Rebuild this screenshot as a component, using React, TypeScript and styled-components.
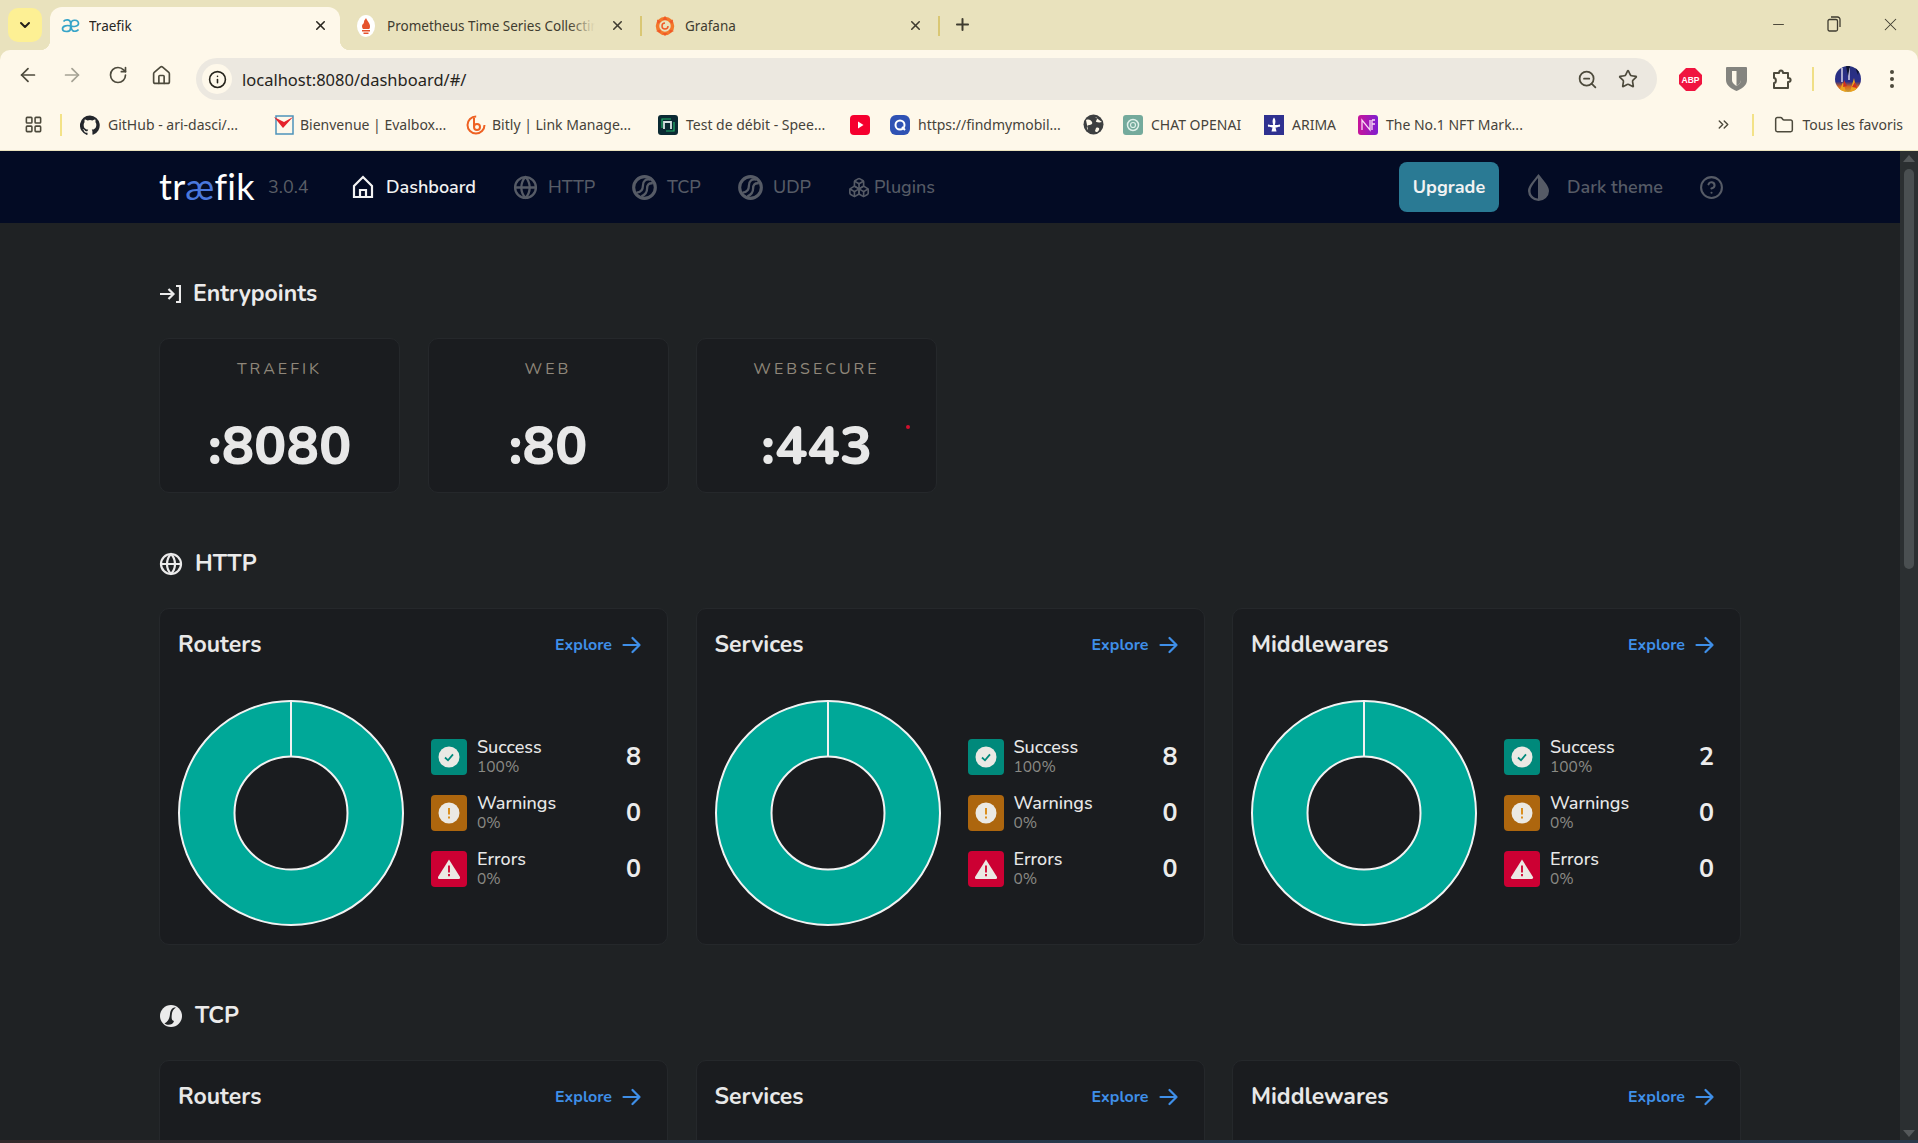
import React from "react";
import styled, { createGlobalStyle } from "styled-components";
import { ArrowLeft, ArrowRight, RotateCw, Home, Info, ZoomOut, Star, ChevronDown, X, Plus, Minus, Folder, ChevronsRight, LayoutGrid, Globe, Boxes, HelpCircle } from "lucide-react";

const Global = createGlobalStyle`
  html, body { margin: 0; padding: 0; background: #1f2224; overflow: hidden; }
  * { box-sizing: border-box; }
`;
const UI = `"Noto Sans", "Open Sans", sans-serif`;
const NU = `"Nunito", "Lato", "Noto Sans", sans-serif`;

const Page = styled.div`width: 1918px; height: 1143px; display: flex; flex-direction: column; overflow: hidden; background: #e9e2bd; position: relative;`;
const TabStrip = styled.div`height: 50px; display: flex; align-items: flex-end; padding-left: 8px; flex: none; font-family: ${UI}; color: #3f3c30;`;
const TabMenu = styled.div`width: 34px; height: 34px; margin-bottom: 8px; border-radius: 10px; background: #fdf094; display: flex; align-items: center; justify-content: center; color: #23201a; margin-right: 8px;`;
const ActiveTab = styled.div`
  width: 290px; height: 43px; background: #fef8ea; border-radius: 12px 12px 0 0; display: flex; align-items: center; padding: 0 12px 6px 11px; font-size: 13.5px; position: relative; color: #28261f; z-index: 1;
  &::before, &::after { content: ""; position: absolute; bottom: 0; width: 10px; height: 10px; background: radial-gradient(circle at 0 0, transparent 10px, #fef8ea 10.5px); }
  &::before { left: -10px; }
  &::after { right: -10px; background: radial-gradient(circle at 100% 0, transparent 10px, #fef8ea 10.5px); }
`;
const Tab = styled.div<{ $w: number; $pl: number }>`width: ${(p) => p.$w}px; height: 43px; display: flex; align-items: center; padding: 0 17px 6px ${(p) => p.$pl}px; font-size: 13.5px; position: relative; flex: none;
  &::after { content: ""; position: absolute; right: 0; top: 9px; height: 20px; width: 2px; background: #d9c774; }
`;
const TabTitle = styled.span<{ $ml: number; $mr?: number }>`flex: 1; margin-left: ${(p) => p.$ml}px; margin-right: ${(p) => p.$mr ?? 0}px; white-space: nowrap; overflow: hidden; position: relative;`;
const TabFade = styled.span`position: absolute; right: 0; top: 0; bottom: 0; width: 26px; background: linear-gradient(90deg, rgba(233,226,189,0), #e9e2bd);`;
const NewTab = styled.div`margin: 0 0 16px 13px; display: flex; color: #3f3c30;`;
const WinButtons = styled.div`margin-left: auto; display: flex; align-items: center; height: 50px; padding-bottom: 2px; color: #3f3c30;`;
const WinBtn = styled.div`width: 56px; display: flex; justify-content: center;`;

const Toolbar = styled.div`height: 50px; flex: none; background: #fef8ea; border-radius: 10px 10px 0 0; display: flex; align-items: center; padding-left: 17px; color: #4d4a3c; font-family: ${UI};`;
const NavBtn = styled.div<{ $w?: number; $dim?: boolean }>`width: ${(p) => p.$w ?? 45}px; display: flex; color: ${(p) => (p.$dim ? "#a5a294" : "#4d4a3c")}; flex: none;`;
const Omni = styled.div`width: 1461px; height: 42px; margin-top: 8px; border-radius: 21px; background: #ece8e0; display: flex; align-items: center; padding: 0 19px 0 6px; flex: none;`;
const InfoWrap = styled.div`width: 30px; height: 30px; border-radius: 50%; background: #fef8ea; display: flex; align-items: center; justify-content: center; color: #26241c;`;
const Url = styled.div`margin-left: 10px; font-size: 16.5px; color: #26241c; flex: 1;`;
const OmniIcon = styled.div`margin-left: 20px; display: flex; color: #4d4a3c;`;
const ExtRow = styled.div`display: flex; align-items: center; margin-top: 8px; margin-left: 21px;`;
const Ext = styled.div<{ $w: number }>`width: ${(p) => p.$w}px; display: flex; justify-content: center; align-items: center; flex: none;`;
const ExtSep = styled.div`width: 2px; height: 24px; background: #f0df86; margin: 0 21px 0 18px; flex: none;`;

const Bookmarks = styled.div`height: 50px; flex: none; background: #fef8ea; display: flex; align-items: center; font-family: ${UI}; font-size: 14px; color: #46433a; padding-left: 24px; padding-bottom: 1px;`;
const BmSep = styled.div<{ $l: number; $r: number }>`width: 2px; height: 22px; background: #f3e287; margin: 0 ${(p) => p.$r}px 0 ${(p) => p.$l}px; flex: none;`;
const Bm = styled.div<{ $w: number; $gap?: number }>`width: ${(p) => p.$w}px; flex: none; display: flex; align-items: center; gap: ${(p) => p.$gap ?? 8}px; white-space: nowrap; overflow: hidden;`;
const BmRight = styled.div`margin-left: auto; display: flex; align-items: center; gap: 9px; padding-right: 15px;`;

const AppArea = styled.div`flex: 1; min-height: 0; display: flex; border-top: 1px solid #e9e2bd; position: relative;`;
const AppCol = styled.div`flex: 1; min-width: 0; background: #1f2224; overflow: hidden; display: flex; flex-direction: column; font-family: ${NU};`;
const ScrollBar = styled.div`width: 18px; flex: none; background: #2b2f31; display: flex; flex-direction: column; align-items: center; padding-top: 4px;`;
const ScrollUp = styled.div`width: 0; height: 0; border-left: 6px solid transparent; border-right: 6px solid transparent; border-bottom: 7px solid #54585a;`;
const Thumb = styled.div`width: 10px; height: 400px; margin-top: 7px; background: #4a4f51; border-radius: 5px;`;
const ScrollDown = styled.div`margin-top: auto; margin-bottom: 6px; width: 0; height: 0; border-left: 6px solid transparent; border-right: 6px solid transparent; border-top: 7px solid #54585a;`;
const TaskEdge = styled.div`position: absolute; left: 0; right: 0; bottom: 0; height: 3px; background: linear-gradient(90deg, #33292a, #26384a 50%, #2a3a4c);`;

const AppBar = styled.div`height: 72px; flex: none; background: #030b24; display: flex; align-items: center; padding-left: 159px;`;
const Logo = styled.div`font-family: "Lato", sans-serif; font-size: 36px; font-weight: 400; color: #fff; width: 94px; letter-spacing: .3px; line-height: 1; margin-bottom: 2px; white-space: nowrap;`;
const LogoAe = styled.span`color: #4a78dd;`;
const Version = styled.div`font-size: 18px; color: #5a5e66; margin-left: 15px; width: 84px;`;
const NavItem = styled.div<{ $active?: boolean; $w: number; $gap: number }>`display: flex; align-items: center; gap: ${(p) => p.$gap}px; width: ${(p) => p.$w}px; flex: none; font-size: 18px; font-weight: ${(p) => (p.$active ? 600 : 500)}; color: ${(p) => (p.$active ? "#f2f2f2" : "#565b66")};`;
const Upgrade = styled.div`margin-left: 464px; width: 100px; height: 50px; flex: none; border-radius: 8px; background: #2a7a94; color: #f2f2f2; font-weight: 700; font-size: 18px; display: flex; align-items: center; justify-content: center;`;
const DarkToggle = styled.div`display: flex; align-items: center; gap: 17px; margin-left: 28px; width: 172px; color: #565b66; font-size: 18px; font-weight: 600;`;

const Main = styled.div`padding: 56px 0 0 159px; width: 1741px;`;
const Section = styled.section`margin-bottom: 56px;`;
const SectionTitle = styled.h2`display: flex; align-items: center; gap: 12px; height: 30px; margin: 0 0 29px; font-size: 23px; font-weight: 700; color: #ebebeb; line-height: 30px;`;
const EntryGrid = styled.div`display: grid; grid-template-columns: repeat(3, 241px); column-gap: 27.5px;`;
const EntryCard = styled.div`height: 155px; background: #1a1c1f; border: 1px solid #25282b; border-radius: 10px; display: flex; flex-direction: column; align-items: center; position: relative;`;
const EntryLabel = styled.div`margin-top: 19px; font-size: 16px; letter-spacing: 3px; color: #8f877a; line-height: 22px;`;
const EntryPort = styled.div`margin-top: 32px; font-size: 54px; font-weight: 800; color: #e8e8e8; line-height: 68px;`;
const RedDot = styled.span`position: absolute; width: 4px; height: 4px; background: #d0102e; border-radius: 50%; right: 26px; top: 86px;`;
const CardGrid = styled.div`display: grid; grid-template-columns: repeat(3, 509px); column-gap: 27.5px;`;
const Card = styled.div`height: 337px; background: #1a1c1f; border: 1px solid #25282b; border-radius: 10px; padding: 18px 26px 0 18px;`;
const CardHead = styled.div`display: flex; align-items: center; justify-content: space-between; height: 35px;`;
const CardTitle = styled.div`font-size: 23px; font-weight: 700; color: #e8e8e8;`;
const Explore = styled.div`display: flex; align-items: center; gap: 10px; font-size: 16px; font-weight: 700; color: #3f8fe8;`;
const CardBody = styled.div`display: flex; align-items: center; margin-top: 38px;`;
const Donut = styled.svg`width: 226px; height: 226px; flex: none; display: block;`;
const Legend = styled.div`display: flex; flex-direction: column; gap: 20px; flex: 1; margin-left: 27px;`;
const LegendRow = styled.div`display: flex; align-items: center; height: 36px;`;
const Badge = styled.div<{ $bg: string }>`width: 36px; height: 36px; border-radius: 4px; background: ${(p) => p.$bg}; display: flex; align-items: center; justify-content: center; flex: none;`;
const LegendText = styled.div`margin-left: 10px; flex: 1;`;
const LegendName = styled.div`font-size: 18px; font-weight: 500; color: #e8e8e8; line-height: 20px;`;
const LegendPct = styled.div`font-size: 15.5px; color: #8a8a85; line-height: 20px;`;
const LegendNum = styled.div`font-size: 25px; font-weight: 700; color: #ececec;`;

const TcpIcon = ({ size, filled }: { size: number; filled?: boolean }) => (
  <svg width={size} height={size} viewBox="0 0 24 24" fill="none" style={{ flex: "none" }}>
    {filled ? (
      <>
        <circle cx="12" cy="12" r="11" fill="#ebebeb" />
        <path d="M17 3.500c-3.500-.5-5.500 2-6 6.500-.4 4-1.500 7.500-5.500 9.500 3 2.500 8.500 1.500 9.500-2.500-2.500-.5-2.500-2.500-2.300-5.500.2-3.500 1.300-6.500 4.300-8z" fill="#1f2224" />
      </>
    ) : (
      <>
        <circle cx="12" cy="12" r="10.400" stroke="currentColor" strokeWidth="3" />
        <path d="M17.500 4.500C13 3.500 10.500 6 10.500 10c0 4-1.500 6.500-6 7M20 8c-4-.5-5.500 1.500-5.500 5s-1.500 6-5.500 7.500" stroke="currentColor" strokeWidth="2.200" />
      </>
    )}
  </svg>
);
const EntryIcon = () => (
  <svg width="22" height="20" viewBox="0 0 22 20" fill="none" stroke="#ebebeb" strokeWidth="2.200" style={{ flex: "none" }}>
    <path d="M1 10h13M9.500 5l5 5-5 5M17 2h4v16h-4" />
  </svg>
);
const HomeIcon = () => (
  <svg width="22" height="24" viewBox="0 0 22 24" fill="none" stroke="#f2f2f2" strokeWidth="2.200" style={{ flex: "none" }}>
    <path d="M11 2 2 11v11h18V11z" />
    <path d="M8 22v-7h6v7" />
  </svg>
);
const DropIcon = () => (
  <svg width="23" height="28" viewBox="0 0 23 28" style={{ flex: "none" }}>
    <path d="M11.500 1C6 8 1 13 1 18a10.500 10 0 0 0 21 0C22 13 17 8 11.500 1z" fill="#565b66" />
    <path d="M11 5C7 10 3.500 14 3.500 18c0 4 3 7 7.500 7.500z" fill="#030b24" />
  </svg>
);
const Arrow = () => (
  <svg width="19" height="18" viewBox="0 0 19 18" fill="none" stroke="#3f8fe8" strokeWidth="2.200" strokeLinecap="round" strokeLinejoin="round">
    <path d="M1.500 9h16M10.500 2l7 7-7 7" />
  </svg>
);
const CheckBadge = () => (
  <svg width="22" height="22" viewBox="0 0 22 22"><circle cx="11" cy="11" r="10.500" fill="#ebe9e4" /><path d="M7 11.500l3 2.800 5-6" fill="none" stroke="#00897b" strokeWidth="1.800" /></svg>
);
const WarnBadge = () => (
  <svg width="22" height="22" viewBox="0 0 22 22"><circle cx="11" cy="11" r="10.500" fill="#ebe9e4" /><path d="M11 6v6.500M11 14.500v2" stroke="#d9860b" strokeWidth="1.800" /></svg>
);
const ErrBadge = () => (
  <svg width="24" height="22" viewBox="0 0 24 22"><path d="M12 1.500 23 19a1.500 1.500 0 0 1-1.300 2H2.300A1.500 1.500 0 0 1 1 19z" fill="#ebe9e4" strokeLinejoin="round" /><path d="M12 7.500v7M12 16v2.200" stroke="#d0002e" strokeWidth="1.800" /></svg>
);
const DonutChart = () => (
  <Donut viewBox="0 0 226 226">
    <circle cx="113" cy="113" r="84.500" fill="none" stroke="#00a898" strokeWidth="56" />
    <circle cx="113" cy="113" r="112" fill="none" stroke="#f2f2f2" strokeWidth="2" />
    <circle cx="113" cy="113" r="56.500" fill="none" stroke="#f2f2f2" strokeWidth="2" />
    <path d="M113 1v56" stroke="#f2f2f2" strokeWidth="2" />
  </Donut>
);
const StatCard = ({ title, ok }: { title: string; ok: number }) => (
  <Card>
    <CardHead>
      <CardTitle>{title}</CardTitle>
      <Explore>Explore <Arrow /></Explore>
    </CardHead>
    <CardBody>
      <DonutChart />
      <Legend>
        <LegendRow>
          <Badge $bg="#00897b"><CheckBadge /></Badge>
          <LegendText><LegendName>Success</LegendName><LegendPct>100%</LegendPct></LegendText>
          <LegendNum>{ok}</LegendNum>
        </LegendRow>
        <LegendRow>
          <Badge $bg="#ad660e"><WarnBadge /></Badge>
          <LegendText><LegendName>Warnings</LegendName><LegendPct>0%</LegendPct></LegendText>
          <LegendNum>0</LegendNum>
        </LegendRow>
        <LegendRow>
          <Badge $bg="#cc0033"><ErrBadge /></Badge>
          <LegendText><LegendName>Errors</LegendName><LegendPct>0%</LegendPct></LegendText>
          <LegendNum>0</LegendNum>
        </LegendRow>
      </Legend>
    </CardBody>
  </Card>
);
const Fav = ({ bg, r = 3, children }: { bg: string; r?: number; children?: React.ReactNode }) => (
  <svg width="20" height="20" viewBox="0 0 20 20" style={{ flex: "none" }}>
    <rect width="20" height="20" rx={r} fill={bg} />
    {children}
  </svg>
);
const GitHubFav = () => (
  <svg width="20" height="20" viewBox="0 0 24 24" style={{ flex: "none" }} fill="#23262b">
    <path d="M12 .5a12 12 0 0 0-3.800 23.400c.6.100.8-.3.800-.6v-2.100c-3.300.7-4-1.600-4-1.600-.5-1.400-1.300-1.800-1.300-1.800-1.100-.7.100-.7.100-.7 1.200.1 1.800 1.200 1.800 1.200 1.100 1.800 2.800 1.300 3.500 1 .1-.8.400-1.300.8-1.600-2.700-.3-5.500-1.300-5.500-6 0-1.300.5-2.400 1.200-3.200-.1-.3-.5-1.500.1-3.200 0 0 1-.3 3.300 1.200a11.500 11.500 0 0 1 6 0c2.300-1.500 3.300-1.200 3.300-1.200.7 1.700.2 2.900.1 3.200.8.800 1.200 1.900 1.200 3.200 0 4.600-2.800 5.700-5.500 6 .4.400.8 1.100.8 2.200v3.300c0 .3.200.7.800.6A12 12 0 0 0 12 .5z" />
  </svg>
);
const PuzzleIcon = () => (
  <svg width="22" height="22" viewBox="0 0 22 22" fill="none" stroke="#4d4a3c" strokeWidth="2" strokeLinejoin="round">
    <path d="M3 5h5c0-3.500 4-3.500 4 0h5v5c3.500 0 3.500 4 0 4v6H3v-5c2.500 0 2.500-5 0-5z" />
  </svg>
);
const Dots = () => (
  <svg width="6" height="20" viewBox="0 0 6 20" fill="#4d4a3c"><circle cx="3" cy="3" r="2" /><circle cx="3" cy="10" r="2" /><circle cx="3" cy="17" r="2" /></svg>
);
const Avatar = () => (
  <svg width="26" height="26" viewBox="0 0 26 26">
    <defs>
      <clipPath id="avc"><circle cx="13" cy="13" r="13" /></clipPath>
      <linearGradient id="av" x1="0" y1="0" x2="0" y2="1"><stop offset="0" stopColor="#27307e" /><stop offset=".6" stopColor="#2b2f8a" /><stop offset=".8" stopColor="#d9691c" /><stop offset="1" stopColor="#c9a036" /></linearGradient>
    </defs>
    <g clipPath="url(#avc)">
      <rect width="26" height="26" fill="url(#av)" />
      <path d="M7 2v14M14 2v12" stroke="#d9d6e6" strokeWidth="1.500" />
      <path d="M4 26l4-10 3 10zM15 26l4-14 3 14z" fill="#eda41e" />
      <path d="M11 0l2 10 2-10zM20 1l3 8 2-8z" fill="#0f1430" />
      <path d="M9 14l3 6-4 1zM20 16l-3 5 5 1z" fill="#d1301e" />
    </g>
  </svg>
);
const GlobeFav = () => (
  <svg width="21" height="21" viewBox="0 0 21 21" style={{ flex: "none" }}>
    <circle cx="10.500" cy="10.500" r="10" fill="#3d3f40" />
    <path d="M3 6c3-1 5 0 6 2s-1 3-3 3-3 3-1 5M12 3c3 0 2 3 1 4s3 2 6 1M13 14c2-1 4 0 3 2s-3 3-4 1z" fill="#fef8ea" />
  </svg>
);

export default function App() {
  return (
    <Page>
      <Global />
      <TabStrip>
        <TabMenu><ChevronDown size={16} strokeWidth={3} /></TabMenu>
        <ActiveTab>
          <svg width="20" height="16" viewBox="0 0 20 16" fill="none" stroke="#36a4c8" strokeWidth="1.700"><path d="M2.500 3.500C4 1.500 9 1 9.500 4.500c.3 2 0 6-.2 7-.5 2.500-7.500 3-7.800-.5C1.200 7.500 7 7 9.500 8c3 1 8 .5 8-2.500C17.500 1.500 10.500 1 10 5c-.3 4 .5 6.500 1.500 7.500 2 1.500 5 .5 6-1" /></svg>
          <TabTitle $ml={8}>Traefik</TabTitle>
          <X size={15} strokeWidth={2.500} />
        </ActiveTab>
        <Tab $w={302} $pl={17}>
          <svg width="18" height="22" viewBox="0 0 18 22"><ellipse cx="9" cy="11" rx="9" ry="11" fill="#fff" /><path d="M9 3c1 3 4 5 4 8s-1 3-1 3H6s-1-1-1-3 2-2 2-4 1-2 2-4zM5 15h8v1.500H5zM6.500 17.500h5V19h-5z" fill="#e6522c" /></svg>
          <TabTitle $ml={12} $mr={15}>Prometheus Time Series Collecting<TabFade /></TabTitle>
          <X size={15} strokeWidth={2.500} />
        </Tab>
        <Tab $w={298} $pl={13}>
          <svg width="20" height="22" viewBox="0 0 20 22"><circle cx="10" cy="11" r="7.500" fill="none" stroke="#f4792b" strokeWidth="3.500" /><path d="M10 1l2.500 4h-5zM18 4.500l-.5 4.500-3.500-2.500zM2 4.500l.5 4.500L6 6.500zM1 16l4.500-1.500V18zM19 16l-4.500-1.500V18zM10 21l-2.500-3h5z" fill="#f05a28" /><path d="M10 8a3 3 0 1 0 3 3" fill="none" stroke="#f05a28" strokeWidth="1.500" /></svg>
          <TabTitle $ml={10}>Grafana</TabTitle>
          <X size={15} strokeWidth={2.500} />
        </Tab>
        <NewTab><Plus size={19} strokeWidth={2.500} /></NewTab>
        <WinButtons>
          <WinBtn><Minus size={17} strokeWidth={1.300} /></WinBtn>
          <WinBtn>
            <svg width="14" height="16" viewBox="0 0 14 16" fill="none" stroke="#3f3c30" strokeWidth="1.300"><rect x="1" y="3.500" width="9.500" height="11.500" rx="1.500" /><path d="M4 1h6.500A2.500 2.500 0 0 1 13 3.500V11" /></svg>
          </WinBtn>
          <WinBtn><X size={21} strokeWidth={1.200} /></WinBtn>
        </WinButtons>
      </TabStrip>
      <Toolbar>
        <NavBtn $w={44}><ArrowLeft size={22} strokeWidth={1.900} /></NavBtn>
        <NavBtn $w={47} $dim><ArrowRight size={22} strokeWidth={1.900} /></NavBtn>
        <NavBtn $w={43}><RotateCw size={20} strokeWidth={2} /></NavBtn>
        <NavBtn $w={45}><Home size={21} strokeWidth={1.900} /></NavBtn>
        <Omni>
          <InfoWrap><Info size={19} strokeWidth={2} /></InfoWrap>
          <Url>localhost:8080/dashboard/#/</Url>
          <OmniIcon><ZoomOut size={21} strokeWidth={2} /></OmniIcon>
          <OmniIcon><Star size={20} strokeWidth={2} /></OmniIcon>
        </Omni>
        <ExtRow>
          <Ext $w={24}>
            <svg width="23" height="23" viewBox="0 0 23 23"><path d="M7 0h9l7 7v9l-7 7H7l-7-7V7z" fill="#f0143f" /><text x="11.500" y="14.500" fontSize="8.500" fontWeight="700" fill="#fff" textAnchor="middle" fontFamily="Liberation Sans">ABP</text></svg>
          </Ext>
          <Ext $w={68}>
            <svg width="21" height="24" viewBox="0 0 21 24"><path d="M1 0h19a1 1 0 0 1 1 1v12c0 6-6 9-10.500 11C6 22 0 19 0 13V1a1 1 0 0 1 1-1z" fill="#84847f" /><path d="M6 4h9v9c0 3-2.500 4.500-4.500 6C8.500 17.500 6 16 6 13z" fill="#fef8ea" /><path d="M10.500 4H15v9c0 3-2.500 4.500-4.500 6z" fill="#84847f" /></svg>
          </Ext>
          <Ext $w={24}><PuzzleIcon /></Ext>
          <ExtSep />
          <Ext $w={26}><Avatar /></Ext>
          <Ext $w={62}><Dots /></Ext>
        </ExtRow>
      </Toolbar>
      <Bookmarks>
        <LayoutGrid size={19} strokeWidth={2} color="#4d4a3c" style={{ flex: "none" }} />
        <BmSep $l={17} $r={18} />
        <Bm $w={194}><GitHubFav /><span>GitHub - ari-dasci/...</span></Bm>
        <Bm $w={192} $gap={6}>
          <svg width="20" height="20" viewBox="0 0 20 20" style={{ flex: "none" }}><rect x="2" y="1" width="17" height="18" fill="none" stroke="#4d93ba" strokeWidth="1.500" /><path d="M0 2l9 11L19 2l-9 5z" fill="#e5232c" /></svg>
          <span>Bienvenue | Evalbox...</span>
        </Bm>
        <Bm $w={192} $gap={6}>
          <svg width="20" height="20" viewBox="0 0 20 20" style={{ flex: "none" }} fill="none" stroke="#ee6123" strokeWidth="2"><circle cx="10" cy="10" r="8.500" strokeDasharray="40 14" /><circle cx="11" cy="12" r="3" /><path d="M8 3v9" /></svg>
          <span>Bitly | Link Manage...</span>
        </Bm>
        <Bm $w={192}>
          <Fav bg="#0b2a33"><path d="M6 14V7h7v7" fill="none" stroke="#d7e2e4" strokeWidth="1.800" /><path d="M4 13V4h9M16 7v9H8" fill="none" stroke="#23b26b" strokeWidth="1.200" /></Fav>
          <span>Test de débit - Spee...</span>
        </Bm>
        <Bm $w={40}>
          <Fav bg="#f5002e" r={4}><path d="M8 6.500v7l5.500-3.500z" fill="#fff" /></Fav>
        </Bm>
        <Bm $w={193}>
          <Fav bg="#2f52b4" r={6}><circle cx="10" cy="10" r="4.500" fill="none" stroke="#fff" strokeWidth="2" /><path d="M12 12l3 3" stroke="#fff" strokeWidth="2" /></Fav>
          <span>https://findmymobil...</span>
        </Bm>
        <Bm $w={40}><GlobeFav /></Bm>
        <Bm $w={141}>
          <Fav bg="#74aa9c"><circle cx="10" cy="10" r="5.500" fill="none" stroke="#dff0ea" strokeWidth="1.500" /><circle cx="10" cy="10" r="2.500" fill="none" stroke="#dff0ea" strokeWidth="1.200" /></Fav>
          <span>CHAT OPENAI</span>
        </Bm>
        <Bm $w={94}>
          <Fav bg="#2f3190" r={0}><path d="M10 2.500c2 2.500 1.500 5 .8 7.500H14c1.500-1.500 3 0 1.500 2-1-1-2 .5-4 .5l1 4H7.500l1-4c-2 0-3-1.500-4-.5C3 10 4.500 8.500 6 10h3.200C8.500 7.500 8 5 10 2.500z" fill="#fff" /></Fav>
          <span>ARIMA</span>
        </Bm>
        <Bm $w={180}>
          <svg width="20" height="20" viewBox="0 0 20 20" style={{ flex: "none" }}><defs><linearGradient id="nf" x1="0" y1="0" x2="1" y2="0"><stop offset="0" stopColor="#c8149a" /><stop offset="1" stopColor="#7e1fd0" /></linearGradient></defs><rect width="20" height="20" rx="3" fill="url(#nf)" /><path d="M4 15V5l8 10V5M14 5h3M14 9h3M14 5v10" fill="none" stroke="#f7dbf4" strokeWidth="1.300" /></svg>
          <span>The No.1 NFT Mark...</span>
        </Bm>
        <BmRight>
          <ChevronsRight size={17} strokeWidth={2} color="#4d4a3c" />
          <BmSep $l={11} $r={11} />
          <Folder size={20} strokeWidth={1.800} color="#4d4a3c" />
          <span>Tous les favoris</span>
        </BmRight>
      </Bookmarks>
      <AppArea>
        <AppCol>
          <AppBar>
            <Logo>tr<LogoAe>æ</LogoAe>fik</Logo>
            <Version>3.0.4</Version>
            <NavItem $active $w={161} $gap={12}><HomeIcon />Dashboard</NavItem>
            <NavItem $w={119} $gap={10}><Globe size={25} strokeWidth={2.200} />HTTP</NavItem>
            <NavItem $w={106} $gap={10}><TcpIcon size={25} />TCP</NavItem>
            <NavItem $w={110} $gap={10}><TcpIcon size={25} />UDP</NavItem>
            <NavItem $w={87} $gap={4}><Boxes size={23} strokeWidth={1.800} />Plugins</NavItem>
            <Upgrade>Upgrade</Upgrade>
            <DarkToggle><DropIcon />Dark theme</DarkToggle>
            <HelpCircle size={25} strokeWidth={2} color="#565b66" />
          </AppBar>
          <Main>
            <Section>
              <SectionTitle><EntryIcon />Entrypoints</SectionTitle>
              <EntryGrid>
                <EntryCard><EntryLabel>TRAEFIK</EntryLabel><EntryPort>:8080</EntryPort></EntryCard>
                <EntryCard><EntryLabel>WEB</EntryLabel><EntryPort>:80</EntryPort></EntryCard>
                <EntryCard><EntryLabel>WEBSECURE</EntryLabel><EntryPort>:443</EntryPort><RedDot /></EntryCard>
              </EntryGrid>
            </Section>
            <Section>
              <SectionTitle><Globe size={24} strokeWidth={2.200} color="#ebebeb" />HTTP</SectionTitle>
              <CardGrid>
                <StatCard title="Routers" ok={8} />
                <StatCard title="Services" ok={8} />
                <StatCard title="Middlewares" ok={2} />
              </CardGrid>
            </Section>
            <Section>
              <SectionTitle><TcpIcon size={24} filled />TCP</SectionTitle>
              <CardGrid>
                <StatCard title="Routers" ok={0} />
                <StatCard title="Services" ok={0} />
                <StatCard title="Middlewares" ok={0} />
              </CardGrid>
            </Section>
          </Main>
        </AppCol>
        <ScrollBar><ScrollUp /><Thumb /><ScrollDown /></ScrollBar>
      </AppArea>
      <TaskEdge />
    </Page>
  );
}
